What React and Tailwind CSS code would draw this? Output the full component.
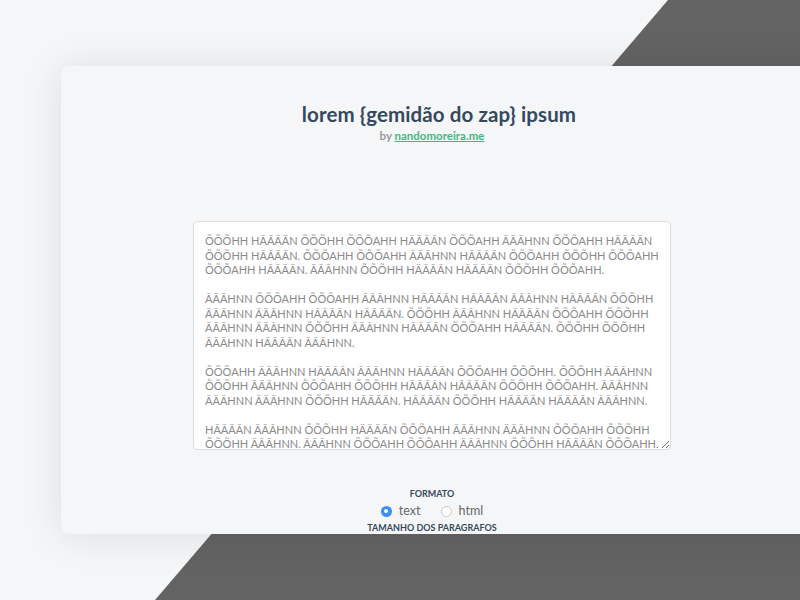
import { useState } from 'react';

const SAMPLE = `ÕÕÕHH HÃÃÃÃN ÕÕÕHH ÕÕÕAHH HÃÃÃÃN ÕÕÕAHH ÃÃÃHNN ÕÕÕAHH HÃÃÃÃN
ÕÕÕHH HÃÃÃÃN. ÕÕÕAHH ÕÕÕAHH ÃÃÃHNN HÃÃÃÃN ÕÕÕAHH ÕÕÕHH ÕÕÕAHH
ÕÕÕAHH HÃÃÃÃN. ÃÃÃHNN ÕÕÕHH HÃÃÃÃN HÃÃÃÃN ÕÕÕHH ÕÕÕAHH.

ÃÃÃHNN ÕÕÕAHH ÕÕÕAHH ÃÃÃHNN HÃÃÃÃN HÃÃÃÃN ÃÃÃHNN HÃÃÃÃN ÕÕÕHH
ÃÃÃHNN ÃÃÃHNN HÃÃÃÃN HÃÃÃÃN. ÕÕÕHH ÃÃÃHNN HÃÃÃÃN ÕÕÕAHH ÕÕÕHH
ÃÃÃHNN ÃÃÃHNN ÕÕÕHH ÃÃÃHNN HÃÃÃÃN ÕÕÕAHH HÃÃÃÃN. ÕÕÕHH ÕÕÕHH
ÃÃÃHNN HÃÃÃÃN ÃÃÃHNN.

ÕÕÕAHH ÃÃÃHNN HÃÃÃÃN ÃÃÃHNN HÃÃÃÃN ÕÕÕAHH ÕÕÕHH. ÕÕÕHH ÃÃÃHNN
ÕÕÕHH ÃÃÃHNN ÕÕÕAHH ÕÕÕHH HÃÃÃÃN HÃÃÃÃN ÕÕÕHH ÕÕÕAHH. ÃÃÃHNN
ÃÃÃHNN ÃÃÃHNN ÕÕÕHH HÃÃÃÃN. HÃÃÃÃN ÕÕÕHH HÃÃÃÃN HÃÃÃÃN ÃÃÃHNN.

HÃÃÃÃN ÃÃÃHNN ÕÕÕHH HÃÃÃÃN ÕÕÕAHH ÃÃÃHNN ÃÃÃHNN ÕÕÕAHH ÕÕÕHH
ÕÕÕHH ÃÃÃHNN. ÃÃÃHNN ÕÕÕAHH ÕÕÕAHH ÃÃÃHNN ÕÕÕHH HÃÃÃÃN ÕÕÕAHH.

ÕÕÕHH HÃÃÃÃN ÃÃÃHNN ÕÕÕAHH HÃÃÃÃN ÕÕÕHH ÃÃÃHNN HÃÃÃÃN ÕÕÕAHH`;

function Radio({ checked, label, onClick }) {
  return (
    <button type="button" onClick={onClick} className="flex items-center gap-[7px]">
      {checked ? (
        <span className="w-[11px] h-[11px] rounded-full bg-[#3d8ef8] flex items-center justify-center">
          <span className="w-[4px] h-[4px] rounded-full bg-white" />
        </span>
      ) : (
        <span className="w-[11px] h-[11px] rounded-full border border-[#c8c8c8] bg-white" />
      )}
      <span className="text-[12.5px] text-[#666]">{label}</span>
    </button>
  );
}

export default function App() {
  const [format, setFormat] = useState('text');

  return (
    <div className="relative w-full h-[600px] overflow-hidden bg-[#f5f6f8] font-['Lato',sans-serif]">
      <svg className="absolute inset-0" width="800" height="600" viewBox="0 0 800 600">
        <polygon points="668,0 800,0 800,600 155,600" fill="#636363" />
      </svg>

      <div className="relative ml-[61px] mt-[66px] w-[800px] h-[468px] rounded-lg bg-[#f5f6f8] shadow-[0_2px_40px_rgba(0,0,0,0.1)] overflow-hidden">
        <div className="w-[742px] flex flex-col items-center pt-[36px]">
          <h1 className="pl-[14px] text-[20.5px] leading-6 font-bold text-[#35495e] tracking-[0.1px]">lorem {'{gemidão do zap}'} ipsum</h1>
          <p className="mt-[2px] text-[11.5px] leading-4 text-[#999] font-bold">
            by{' '}
            <a href="#" className="text-[#42b983] underline">
              nandomoreira.me
            </a>
          </p>

          <textarea
            readOnly
            defaultValue={SAMPLE}
            className="mt-[77px] w-[478px] h-[229px] shrink-0 bg-white border border-[#dcdcdc] rounded-[4px] px-[11px] pt-[12px] text-[11px] leading-[14.5px] text-[#8a8a8a] whitespace-pre overflow-hidden outline-none font-['Lato',sans-serif]"
          />

          <p className="mt-[38px] text-[9px] leading-3 font-bold text-[#35495e]">FORMATO</p>
          <div className="mt-[2px] flex items-center gap-[20px]">
            <Radio checked={format === 'text'} label="text" onClick={() => setFormat('text')} />
            <Radio checked={format === 'html'} label="html" onClick={() => setFormat('html')} />
          </div>
          <p className="mt-[1px] text-[9px] leading-3 font-bold text-[#35495e]">TAMANHO DOS PARAGRAFOS</p>
        </div>
      </div>
    </div>
  );
}
